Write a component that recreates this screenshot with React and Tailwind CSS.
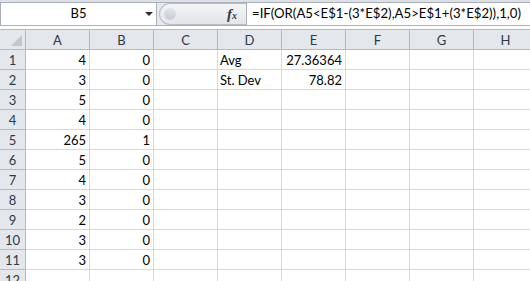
const cols = ['A', 'B', 'C', 'D', 'E', 'F', 'G', 'H'];

const rows = [
  ['4', '0', '', 'Avg', '27.36364'],
  ['3', '0', '', 'St. Dev', '78.82'],
  ['5', '0'],
  ['4', '0'],
  ['265', '1'],
  ['5', '0'],
  ['4', '0'],
  ['3', '0'],
  ['2', '0'],
  ['3', '0'],
  ['3', '0'],
  [],
];

const FormulaBar = () => (
  <div className="bg-[#dde1e7]">
    <div className="h-[2px]" />
    <div className="flex h-[24px] border-y border-[#a9b0b9] bg-[#e7eaee]">
      <div className="relative flex w-[157px] items-center justify-center border-x border-[#a9b0b9] bg-white text-[13px] text-black">
        B5
        <span className="absolute right-[3px] top-[9px] h-0 w-0 border-x-[4px] border-t-[4px] border-x-transparent border-t-[#2d2d2d]" />
      </div>
      <div className="flex flex-1 items-center">
        <div className="ml-[2px] flex h-[22px] flex-1 items-center rounded-l-full border-y border-l border-[#b8bec6] bg-gradient-to-b from-[#f4f5f7] to-[#e2e5e9] pl-[4px]">
          <div className="h-[12px] w-[12px] rounded-full bg-gradient-to-b from-[#e2e5e9] to-[#c8ccd2]" />
          <div className="ml-auto mr-[9px] font-['Liberation_Serif'] text-[15px] font-bold italic text-[#3a3a3a]">
            f<span className="text-[10px]">x</span>
          </div>
        </div>
      </div>
      <div className="flex w-[284px] items-center border-l border-[#a9b0b9] bg-white pl-[5px] text-[13.2px] text-black">
        =IF(OR(A5&lt;E$1-(3*E$2),A5&gt;E$1+(3*E$2)),1,0)
      </div>
    </div>
    <div className="h-[3px] bg-white" />
  </div>
);

const App = () => (
  <div className="h-[281px] w-[530px] overflow-hidden bg-white font-['Lato',sans-serif]">
    <FormulaBar />
    <div className="grid grid-cols-[26px_64px_64px_64px_64px_64px_64px_64px_64px] border-t border-[#b4bac2]">
      <div className="relative h-[20px] border-b border-r border-[#b4bac2] bg-[#e4e7ec]">
        <span className="absolute bottom-[3px] right-[3px] h-0 w-0 border-b-[11px] border-l-[11px] border-b-[#c3c7cd] border-l-transparent" />
      </div>
      {cols.map(c => (
        <div key={c} className="flex h-[20px] items-center justify-center border-b border-r border-[#b4bac2] bg-[#e4e7ec] pt-[2px] text-[13px] text-[#2e3a48]">
          {c}
        </div>
      ))}
      {rows.map((r, i) => (
        <div key={i} className="contents">
          <div className="flex h-[20px] items-center justify-center border-b border-r border-[#b4bac2] bg-[#e4e7ec] pt-[2px] text-[13px] text-[#2e3a48]">
            {i + 1}
          </div>
          {cols.map((c, j) => {
            const v = r[j] || '';
            const left = isNaN(Number(v));
            return (
              <div
                key={c}
                className={`flex h-[20px] items-center border-b border-r border-[#d9d9d9] pt-[2px] text-[13px] text-black ${left ? 'justify-start pl-[2px]' : 'justify-end pr-[3px]'}`}
              >
                {v}
              </div>
            );
          })}
        </div>
      ))}
    </div>
  </div>
);

export default App;
